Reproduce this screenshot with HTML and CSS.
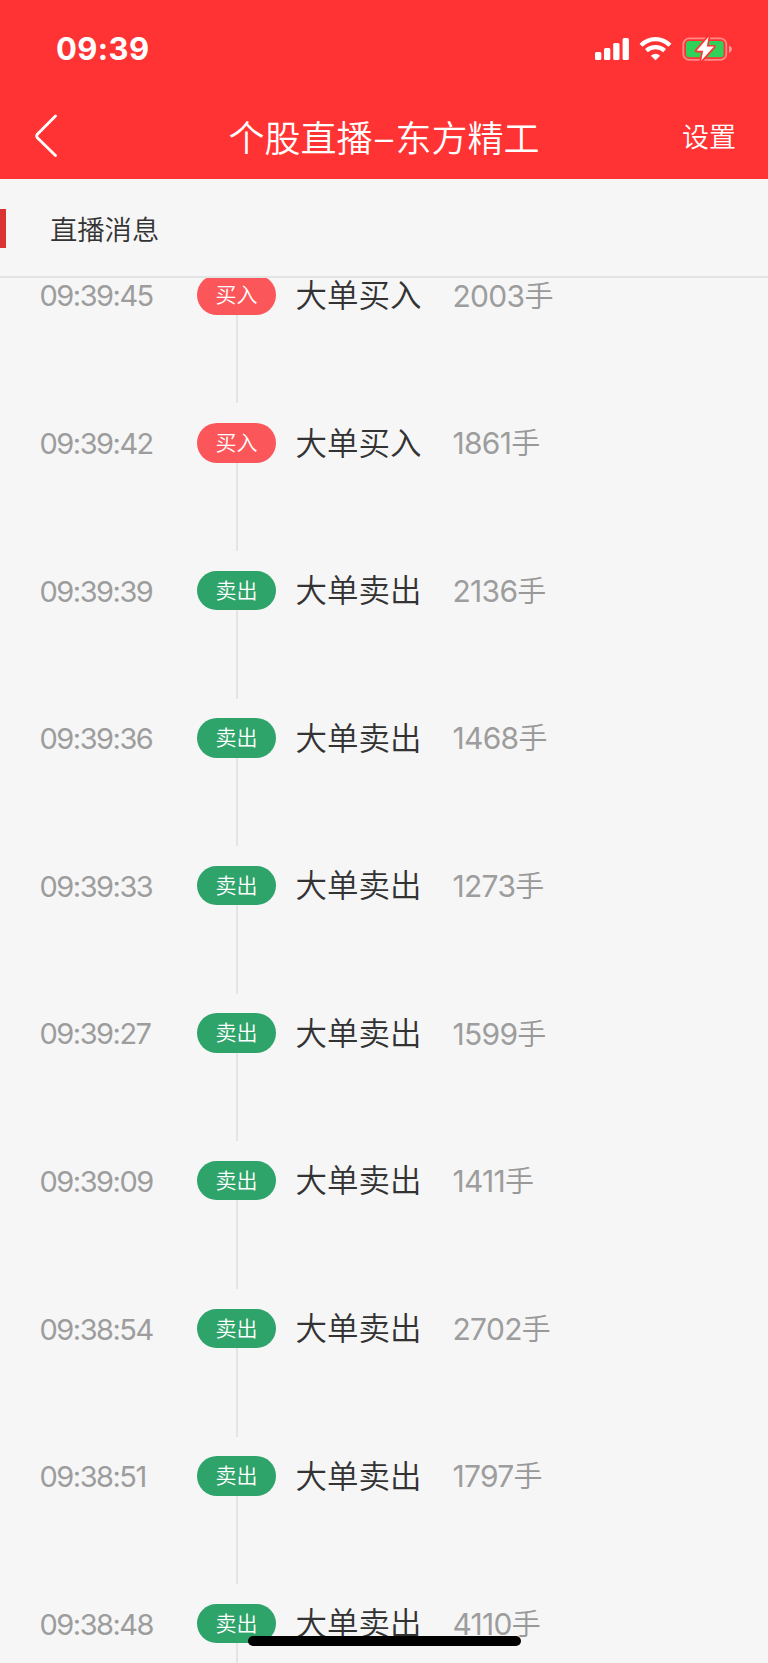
FILE: index.html
```html
<!DOCTYPE html>
<html lang="zh-CN">
<head>
<meta charset="utf-8">
<title>个股直播</title>
<link rel="stylesheet" href="styles.css">
</head>
<body>
<div class="screen">
  <header class="top">
    <div class="status">
      <span class="clock">09:39</span>
      <svg class="status-icons" width="140" height="28" viewBox="0 0 140 28">
        <g fill="#fff">
          <rect x="0" y="16" width="6.3" height="8" rx="1.5"/>
          <rect x="9" y="12" width="6.3" height="12" rx="1.5"/>
          <rect x="18.2" y="7" width="6.3" height="17" rx="1.5"/>
          <rect x="27.6" y="2" width="6.3" height="22" rx="1.5"/>
          <path d="M60.5 24.2 L55.9 19.7 Q60.5 16 65.1 19.7 Z"/>
        </g>
        <g fill="none" stroke="#fff" stroke-width="4.2">
          <path d="M46 9.3 Q52.2 3.1 60.5 3.1 T75 9.3"/>
          <path d="M51.4 14.6 Q55.2 11.1 60.5 11.1 T69.6 14.6"/>
        </g>
        <rect x="88.3" y="2.3" width="43" height="21.6" rx="6" fill="none" stroke="#fff" stroke-opacity=".42" stroke-width="1.8"/>
        <path d="M134 9.5 Q137 10.8 137 13.2 T134 17 Z" fill="#fff" fill-opacity=".5"/>
        <rect x="91" y="5" width="37.6" height="16.2" rx="3" fill="#30d158"/>
        <path d="M113.6 .8 L101.6 14.7 H108.2 L106.2 24.8 L119 10.6 H111.8 Z" fill="#fff" stroke="#ff3333" stroke-width="3.4" stroke-linejoin="round" paint-order="stroke"/>
      </svg>
    </div>
    <nav class="nav">
      <svg class="back" width="24" height="44" viewBox="0 0 24 44"><path d="M20.5 2 L2.6 20 Q.8 22 2.6 24 L20.5 41.5" fill="none" stroke="#fff" stroke-width="2.8" stroke-linecap="round"/></svg>
      <h1 class="title">个股直播<span class="dash">–</span>东方精工</h1>
      <a class="settings">设置</a>
    </nav>
  </header>
  <section class="section-head"><i class="marker"></i><h2 class="section-title">直播消息</h2></section>
  <main class="feed">
    <div class="row"><time class="time">09:39:45</time><div class="track"><span class="tag buy">买入</span></div><span class="kind">大单买入</span><span class="amount">2003<b>手</b></span></div>
    <div class="row"><time class="time">09:39:42</time><div class="track"><span class="tag buy">买入</span></div><span class="kind">大单买入</span><span class="amount">1861<b>手</b></span></div>
    <div class="row"><time class="time">09:39:39</time><div class="track"><span class="tag sell">卖出</span></div><span class="kind">大单卖出</span><span class="amount">2136<b>手</b></span></div>
    <div class="row"><time class="time">09:39:36</time><div class="track"><span class="tag sell">卖出</span></div><span class="kind">大单卖出</span><span class="amount">1468<b>手</b></span></div>
    <div class="row"><time class="time">09:39:33</time><div class="track"><span class="tag sell">卖出</span></div><span class="kind">大单卖出</span><span class="amount">1273<b>手</b></span></div>
    <div class="row"><time class="time">09:39:27</time><div class="track"><span class="tag sell">卖出</span></div><span class="kind">大单卖出</span><span class="amount">1599<b>手</b></span></div>
    <div class="row"><time class="time">09:39:09</time><div class="track"><span class="tag sell">卖出</span></div><span class="kind">大单卖出</span><span class="amount">1411<b>手</b></span></div>
    <div class="row"><time class="time">09:38:54</time><div class="track"><span class="tag sell">卖出</span></div><span class="kind">大单卖出</span><span class="amount">2702<b>手</b></span></div>
    <div class="row"><time class="time">09:38:51</time><div class="track"><span class="tag sell">卖出</span></div><span class="kind">大单卖出</span><span class="amount">1797<b>手</b></span></div>
    <div class="row"><time class="time">09:38:48</time><div class="track"><span class="tag sell">卖出</span></div><span class="kind">大单卖出</span><span class="amount">4110<b>手</b></span></div>
  </main>
  <div class="home-bar"></div>
</div>
</body>
</html>
```

FILE: styles.css
```css
* { box-sizing: border-box; margin: 0; padding: 0; }
body { background: #f6f6f6; font-family: Inter, "Noto Sans CJK SC", sans-serif; color: #333; }
.screen { position: relative; width: 768px; height: 1663px; overflow: hidden; display: flex; flex-direction: column; }

.top { flex: none; height: 179px; background: #ff3333; color: #fff; }
.status { height: 96px; padding: 2px 33px 0 56px; display: flex; align-items: center; justify-content: space-between; }
.clock { font-size: 31px; font-weight: 700; line-height: 40px; letter-spacing: .4px; }
.status-icons { display: block; margin-top: 2px; }
.nav { height: 83px; padding: 0 32px 0 35px; display: grid; grid-template-columns: 90px 1fr 90px; }
.back { display: block; margin-top: 18px; }
.title { font: 350 36px/54px "Noto Sans CJK SC", sans-serif; text-align: center; white-space: nowrap; margin: 13px 0 0 -3px; }
.dash { display: inline-block; width: 23px; font-family: Inter, sans-serif; text-align: center; }
.settings { font: 350 27px/40px "Noto Sans CJK SC", sans-serif; text-align: right; margin-top: 20px; }

.section-head { flex: none; height: 99px; border-bottom: 2px solid #e4e4e4; display: flex; align-items: flex-start; }
.marker { width: 6px; height: 39px; margin-top: 30px; background: #d93333; }
.section-title { font: 350 27.3px/40px "Noto Sans CJK SC", sans-serif; margin: 29px 0 0 44px; }

.feed { flex: 1; min-height: 0; overflow: hidden; }
.row { height: 147.6px; display: grid; grid-template-columns: 157px 79px 157px auto; padding-left: 40px; align-items: start; }
.row:first-child { margin-top: -2.6px; }
.time { font-size: 29px; font-weight: 400; line-height: 33px; letter-spacing: -1.5px; color: #9d9d9d; margin: 4px 0 0 -.5px; }
.track { height: 128px; display: flex; flex-direction: column; align-items: center; }
.track::after { content: ""; flex: 1; width: 2px; margin-left: 1px; background: #e4e4e4; }
.tag { width: 79px; height: 39.5px; border-radius: 20px; color: #fff; font: 350 21px/37px "Noto Sans CJK SC", sans-serif; text-align: center; }
.buy { background: #fb575b; }
.sell { background: #2ea36a; }
.kind { margin-top: 1.5px; padding-left: 19.5px; font: 350 31.5px/32px "Noto Sans CJK SC", sans-serif; white-space: nowrap; }
.amount { margin-top: 2.2px; padding-left: 19.5px; font-size: 30px; font-weight: 400; line-height: 32px; letter-spacing: -.7px; color: #9d9d9d; white-space: nowrap; }
.amount b { font: 350 29px/32px "Noto Sans CJK SC", sans-serif; color: #999; }

.home-bar { position: absolute; left: 248px; bottom: 17px; width: 273px; height: 10px; border-radius: 5px; background: #000; }
```
